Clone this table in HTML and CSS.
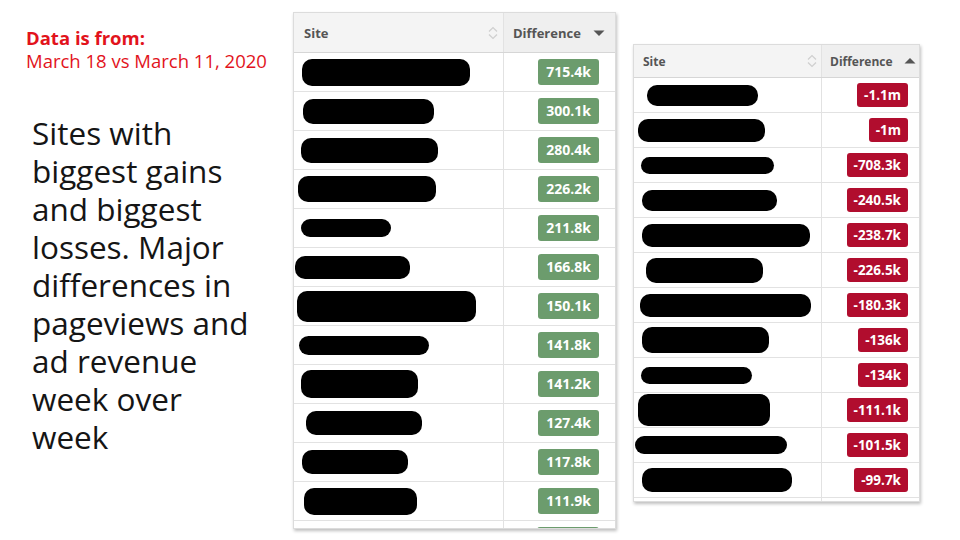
FILE: index.html
```html
<!DOCTYPE html>
<html>
<head>
<meta charset="utf-8">
<link rel="stylesheet" href="styles.css">
</head>
<body>
<div class="slide">
  <div class="intro">
    <div class="source">
      <div class="source-title">Data is from:</div>
      <div class="source-date">March 18 vs March 11, 2020</div>
    </div>
    <p class="lead"><span class="line">Sites with</span><span class="line">biggest gains</span><span class="line">and biggest</span><span class="line">losses. Major</span><span class="line">differences in</span><span class="line">pageviews and</span><span class="line">ad revenue</span><span class="line">week over</span><span class="line">week</span></p>
  </div>

  <div class="panel panel-gains">
    <div class="row head">
      <div class="cell site">Site
        <svg class="sort-both" width="12" height="16" viewBox="0 0 12 16"><path d="M2 6.5 L6 2.5 L10 6.5 M2 9.5 L6 13.5 L10 9.5" fill="none" stroke="#cfcfcf" stroke-width="1.2"/></svg>
      </div>
      <div class="cell diff sorted">Difference
        <svg class="sort-one" width="12" height="8" viewBox="0 0 12 8"><path d="M0.5 1.5 L11.5 1.5 L6 7 Z" fill="#555"/></svg>
      </div>
    </div>
    <div class="row"><div class="cell site"><span class="bar" style="margin-left:8px;width:168px;height:27px"></span></div><div class="cell diff"><span class="badge up">715.4k</span></div></div>
    <div class="row"><div class="cell site"><span class="bar" style="margin-left:9px;width:131px;height:25px"></span></div><div class="cell diff"><span class="badge up">300.1k</span></div></div>
    <div class="row"><div class="cell site"><span class="bar" style="margin-left:7px;width:137px;height:25px"></span></div><div class="cell diff"><span class="badge up">280.4k</span></div></div>
    <div class="row"><div class="cell site"><span class="bar" style="margin-left:4px;width:138px;height:26px"></span></div><div class="cell diff"><span class="badge up">226.2k</span></div></div>
    <div class="row"><div class="cell site"><span class="bar" style="margin-left:7px;width:90px;height:18px"></span></div><div class="cell diff"><span class="badge up">211.8k</span></div></div>
    <div class="row"><div class="cell site"><span class="bar" style="margin-left:1px;width:115px;height:23px"></span></div><div class="cell diff"><span class="badge up">166.8k</span></div></div>
    <div class="row"><div class="cell site"><span class="bar" style="margin-left:3px;width:179px;height:31px"></span></div><div class="cell diff"><span class="badge up">150.1k</span></div></div>
    <div class="row"><div class="cell site"><span class="bar" style="margin-left:5px;width:130px;height:19px"></span></div><div class="cell diff"><span class="badge up">141.8k</span></div></div>
    <div class="row"><div class="cell site"><span class="bar" style="margin-left:7px;width:117px;height:28px"></span></div><div class="cell diff"><span class="badge up">141.2k</span></div></div>
    <div class="row"><div class="cell site"><span class="bar" style="margin-left:12px;width:116px;height:24px"></span></div><div class="cell diff"><span class="badge up">127.4k</span></div></div>
    <div class="row"><div class="cell site"><span class="bar" style="margin-left:8px;width:106px;height:24px"></span></div><div class="cell diff"><span class="badge up">117.8k</span></div></div>
    <div class="row"><div class="cell site"><span class="bar" style="margin-left:10px;width:113px;height:27px"></span></div><div class="cell diff"><span class="badge up">111.9k</span></div></div>
    <div class="row partial"><div class="cell site"></div><div class="cell diff"><span class="badge up stub"></span></div></div>
  </div>

  <div class="panel panel-losses">
    <div class="row head">
      <div class="cell site">Site
        <svg class="sort-both" width="12" height="16" viewBox="0 0 12 16"><path d="M2 6.5 L6 2.5 L10 6.5 M2 9.5 L6 13.5 L10 9.5" fill="none" stroke="#cfcfcf" stroke-width="1.2"/></svg>
      </div>
      <div class="cell diff sorted">Difference
        <svg class="sort-one" width="12" height="8" viewBox="0 0 12 8"><path d="M0.5 6.5 L11.5 6.5 L6 1 Z" fill="#555"/></svg>
      </div>
    </div>
    <div class="row"><div class="cell site"><span class="bar" style="margin-left:13px;width:111px;height:21px"></span></div><div class="cell diff"><span class="badge down">-1.1m</span></div></div>
    <div class="row"><div class="cell site"><span class="bar" style="margin-left:4px;width:127px;height:23px"></span></div><div class="cell diff"><span class="badge down">-1m</span></div></div>
    <div class="row"><div class="cell site"><span class="bar" style="margin-left:7px;width:133px;height:17px"></span></div><div class="cell diff"><span class="badge down">-708.3k</span></div></div>
    <div class="row"><div class="cell site"><span class="bar" style="margin-left:8px;width:135px;height:21px"></span></div><div class="cell diff"><span class="badge down">-240.5k</span></div></div>
    <div class="row"><div class="cell site"><span class="bar" style="margin-left:8px;width:168px;height:23px"></span></div><div class="cell diff"><span class="badge down">-238.7k</span></div></div>
    <div class="row"><div class="cell site"><span class="bar" style="margin-left:12px;width:117px;height:25px"></span></div><div class="cell diff"><span class="badge down">-226.5k</span></div></div>
    <div class="row"><div class="cell site"><span class="bar" style="margin-left:6px;width:171px;height:23px"></span></div><div class="cell diff"><span class="badge down">-180.3k</span></div></div>
    <div class="row"><div class="cell site"><span class="bar" style="margin-left:8px;width:127px;height:26px"></span></div><div class="cell diff"><span class="badge down">-136k</span></div></div>
    <div class="row"><div class="cell site"><span class="bar" style="margin-left:7px;width:111px;height:17px"></span></div><div class="cell diff"><span class="badge down">-134k</span></div></div>
    <div class="row"><div class="cell site"><span class="bar" style="margin-left:4px;width:132px;height:32px"></span></div><div class="cell diff"><span class="badge down">-111.1k</span></div></div>
    <div class="row"><div class="cell site"><span class="bar" style="margin-left:1px;width:152px;height:18px"></span></div><div class="cell diff"><span class="badge down">-101.5k</span></div></div>
    <div class="row"><div class="cell site"><span class="bar" style="margin-left:8px;width:150px;height:24px"></span></div><div class="cell diff"><span class="badge down">-99.7k</span></div></div>
    <div class="row tail"><div class="cell site"></div><div class="cell diff"></div></div>
  </div>
</div>
</body>
</html>
```

FILE: styles.css
```css
html, body {
  margin: 0;
  padding: 0;
  background: #ffffff;
}

.slide {
  width: 960px;
  height: 540px;
  overflow: hidden;
  display: flex;
  align-items: flex-start;
  font-family: "Open Sans", "DejaVu Sans", sans-serif;
}

.intro {
  width: 293px;
  flex: none;
}

.source {
  margin: 26px 0 0 26px;
  color: #e2131c;
  font-size: 18.5px;
  line-height: 23px;
}

.source-title {
  font-weight: 700;
}

.lead {
  margin: 42px 0 0 32px;
  font-size: 31.5px;
  line-height: 38px;
  color: #151515;
}

.lead .line {
  display: block;
  height: 38px;
}

.panel {
  flex: none;
  background: #fff;
  border: 1px solid #dcdcdc;
  box-shadow: 1px 2px 3px rgba(0,0,0,0.25);
  overflow: hidden;
}

.panel-gains {
  margin-top: 12px;
  width: 321px;
  height: 515px;
}

.panel-losses {
  margin-top: 44px;
  margin-left: 17px;
  width: 285px;
  height: 456px;
}

.row {
  display: grid;
  border-bottom: 1px solid #e2e2e2;
}

.panel-gains .row {
  grid-template-columns: 209px 1fr;
  height: 38px;
}

.panel-losses .row {
  grid-template-columns: 187px 1fr;
  height: 34px;
}

.panel-gains .row.head {
  height: 39px;
  border-bottom: 1px solid #d6d6d6;
}

.panel-losses .row.head {
  height: 32px;
  border-bottom: 1px solid #d6d6d6;
}

.cell {
  display: flex;
  align-items: center;
  min-width: 0;
}

.cell.diff {
  border-left: 1px solid #e2e2e2;
  justify-content: flex-end;
}

.panel-gains .cell.diff {
  padding-right: 16px;
}

.panel-losses .cell.diff {
  padding-right: 11px;
}

.head .cell {
  background: #f4f4f4;
  font-size: 13px;
  font-weight: 700;
  color: #555;
}

.panel-losses .head .cell {
  font-size: 12px;
}

.head .cell.site {
  padding-left: 10px;
  justify-content: space-between;
  padding-right: 4px;
}

.panel-losses .head .cell.site {
  padding-left: 9px;
  padding-right: 3px;
}

.head .cell.diff.sorted {
  background: #efefef;
  justify-content: flex-start;
  padding-left: 9px;
  padding-right: 0;
  gap: 12px;
}

.panel-losses .head .cell.diff.sorted {
  padding-left: 8px;
  gap: 11px;
}

.bar {
  display: block;
  background: #000;
  border-radius: 10px;
}

.badge {
  display: inline-block;
  border-radius: 3px;
  color: #fff;
  font-weight: 700;
}

.badge.up {
  background: #6c9c6d;
  height: 26px;
  line-height: 26px;
  padding: 0 8px;
  font-size: 14px;
}

.badge.down {
  background: #b10d2e;
  height: 24px;
  line-height: 24px;
  padding: 0 7px;
  font-size: 13.5px;
}

.row.partial .cell.diff {
  align-items: flex-start;
  padding-top: 6px;
}

.badge.stub {
  width: 46px;
}

.row.tail {
  border-bottom: none;
}
```
